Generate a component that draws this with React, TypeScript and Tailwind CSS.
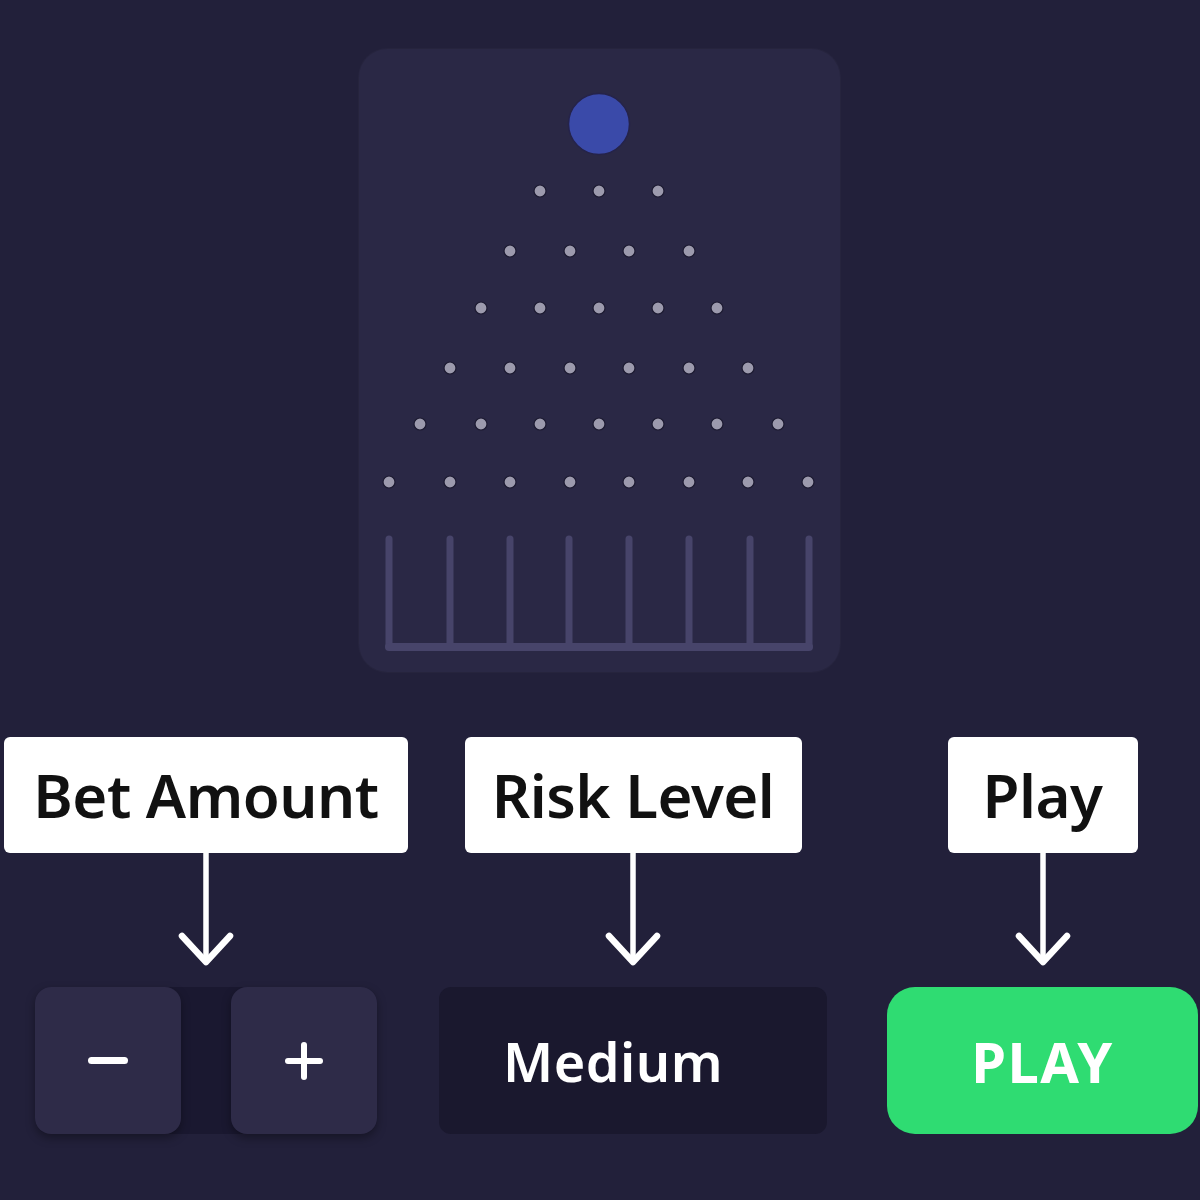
import React from 'react';

const ROWS = [
  { y: 142, xs: [181, 240, 299] },
  { y: 202, xs: [151, 211, 270, 330] },
  { y: 259, xs: [122, 181, 240, 299, 358] },
  { y: 319, xs: [91, 151, 211, 270, 330, 389] },
  { y: 375, xs: [61, 122, 181, 240, 299, 358, 419] },
  { y: 433, xs: [30, 91, 151, 211, 270, 330, 389, 449] },
];

const BINS = [30, 91, 151, 210, 270, 330, 391, 450];

function Board() {
  return (
    <div className="w-[481px] h-[623px] rounded-[28px] bg-[#2a2845] shadow-[0_0_0_1px_rgba(255,255,255,0.02)]">
      <svg width="481" height="623" viewBox="0 0 481 623">
        <circle cx="240" cy="75" r="30.5" fill="#3a4aa9" stroke="#25234a" strokeWidth="1.5" />
        {ROWS.map((row) =>
          row.xs.map((x) => (
            <circle key={`${row.y}-${x}`} cx={x} cy={row.y} r="6" fill="#9c9aad" stroke="#1d1b32" strokeWidth="1.2" />
          ))
        )}
        {BINS.map((x) => (
          <line key={x} x1={x} y1="490" x2={x} y2="597" stroke="#47446a" strokeWidth="7" strokeLinecap="round" />
        ))}
        <line x1="30" y1="598" x2="450" y2="598" stroke="#47446a" strokeWidth="8" strokeLinecap="round" />
      </svg>
    </div>
  );
}

function Arrow() {
  return (
    <div className="h-[134px] flex justify-center">
      <svg width="60" height="116" viewBox="0 0 60 116">
        <line x1="30" y1="0" x2="30" y2="108" stroke="white" strokeWidth="5.5" />
        <polyline points="6,83 30,109 54,83" fill="none" stroke="white" strokeWidth="6.5" strokeLinecap="round" strokeLinejoin="round" />
      </svg>
    </div>
  );
}

function Label({ text, width }: { text: string; width: string }) {
  return (
    <div className={`${width} h-[116px] bg-white rounded-md flex items-center justify-center`}>
      <span className="text-[60px] font-semibold text-[#111] leading-none tracking-[-0.5px]">{text}</span>
    </div>
  );
}

export default function App() {
  return (
    <div className="w-[1200px] h-[1200px] bg-[#22203a] overflow-hidden font-['Noto_Sans',sans-serif]">
      <div className="pt-[49px] flex justify-center pr-[1px]">
        <Board />
      </div>

      <div className="mt-[65px] flex">
        {/* Bet amount */}
        <div className="ml-[4px] w-[404px] flex flex-col items-center">
          <Label text="Bet Amount" width="w-[404px]" />
          <Arrow />
          <div className="w-[342px] h-[147px] flex justify-between rounded-2xl bg-[#1a1830]">
            <button className="w-[146px] h-full rounded-2xl bg-[#2e2b48] shadow-[0_4px_10px_rgba(0,0,0,0.35)] flex items-center justify-center">
              <span className="block w-[40px] h-[7px] rounded-full bg-white" />
            </button>
            <button className="w-[146px] h-full rounded-2xl bg-[#2e2b48] shadow-[0_4px_10px_rgba(0,0,0,0.35)] flex items-center justify-center">
              <svg width="38" height="38" viewBox="0 0 38 38">
                <line x1="19" y1="3" x2="19" y2="35" stroke="white" strokeWidth="6" strokeLinecap="round" />
                <line x1="3" y1="19" x2="35" y2="19" stroke="white" strokeWidth="6" strokeLinecap="round" />
              </svg>
            </button>
          </div>
        </div>

        {/* Risk level */}
        <div className="ml-[31px] w-[388px] flex flex-col items-center">
          <Label text="Risk Level" width="w-[337px]" />
          <Arrow />
          <div className="w-[388px] h-[147px] rounded-xl bg-[#1a182e] flex items-center pl-[64px]">
            <span className="text-[54px] font-semibold text-white leading-none tracking-[0.5px]">Medium</span>
          </div>
        </div>

        {/* Play */}
        <div className="ml-[60px] w-[311px] flex flex-col items-center">
          <Label text="Play" width="w-[190px]" />
          <Arrow />
          <button className="w-[311px] h-[147px] rounded-[28px] bg-[#2fdc72] flex items-center justify-center">
            <span className="text-[56px] font-bold text-white leading-none tracking-[1.5px]">PLAY</span>
          </button>
        </div>
      </div>
    </div>
  );
}
